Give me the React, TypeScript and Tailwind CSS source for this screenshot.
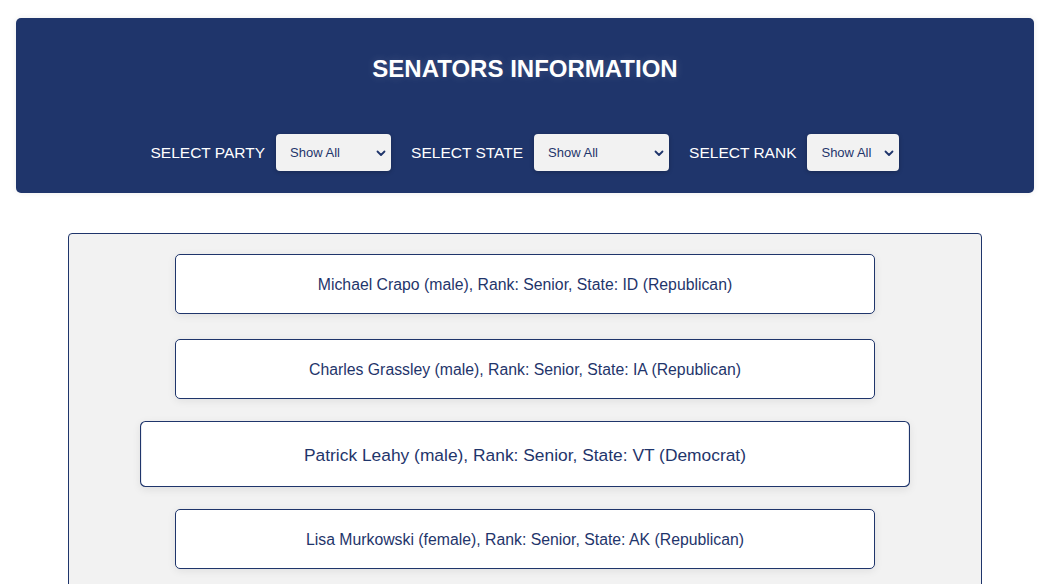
const senators = [
  "Michael Crapo (male), Rank: Senior, State: ID (Republican)",
  "Charles Grassley (male), Rank: Senior, State: IA (Republican)",
  "Patrick Leahy (male), Rank: Senior, State: VT (Democrat)",
  "Lisa Murkowski (female), Rank: Senior, State: AK (Republican)",
];

function Filter({ label, width }: { label: string; width: string }) {
  return (
    <div className="flex items-center gap-[11px]">
      <span className="text-white text-[15.5px]">{label}</span>
      <div className={`relative h-[37px] ${width} rounded-[4px] bg-[#f2f2f2] shadow-[0_1px_4px_rgba(0,0,0,0.25)]`}>
        <select className="appearance-none h-full w-full bg-transparent pl-[14px] pr-6 text-[13px] text-[#1f356b] outline-none">
          <option>Show All</option>
        </select>
        <svg
          className="pointer-events-none absolute right-[4px] top-1/2 -translate-y-1/2"
          width="12"
          height="12"
          viewBox="0 0 12 12"
          fill="none"
        >
          <path d="M2.5 4.5 6 8l3.5-3.5" stroke="#1f356b" strokeWidth="1.8" strokeLinecap="round" strokeLinejoin="round" />
        </svg>
      </div>
    </div>
  );
}

export default function App() {
  return (
    <main className="min-h-screen bg-white font-['Liberation_Sans',Arial,sans-serif]">
      <div className="w-[1050px] px-4 pt-[18px]">

        {/* Header */}
        <div className="h-[175px] rounded-[5px] bg-[#1f356b] shadow-[0_0_6px_rgba(0,0,0,0.08)] flex flex-col items-center">
          <h1 className="mt-[37px] text-[24px] leading-[28px] font-bold text-white [text-shadow:0_0_10px_rgba(255,255,255,0.15)]">
            SENATORS INFORMATION
          </h1>
          <div className="mt-[51px] flex items-center gap-[20px]">
            <Filter label="SELECT PARTY" width="w-[115px]" />
            <Filter label="SELECT STATE" width="w-[135px]" />
            <Filter label="SELECT RANK" width="w-[92px]" />
          </div>
        </div>

        {/* List */}
        <div className="mx-auto mt-[40px] w-[914px] rounded-[4px] border border-[#1f356b] bg-[#f2f2f2] pt-[20px] pb-6 flex flex-col items-center gap-[25px]">
          {senators.map((s, i) => (
            <div
              key={i}
              className={`h-[60px] w-[700px] shrink-0 flex items-center justify-center rounded-[5px] border border-[#1f356b] bg-white text-[15.8px] leading-[20px] pt-[1px] text-[#1f356b] shadow-[0_2px_8px_rgba(0,0,0,0.08)] ${i === 2 ? "scale-110" : ""}`}
            >
              {s}
            </div>
          ))}
        </div>

      </div>
    </main>
  );
}
